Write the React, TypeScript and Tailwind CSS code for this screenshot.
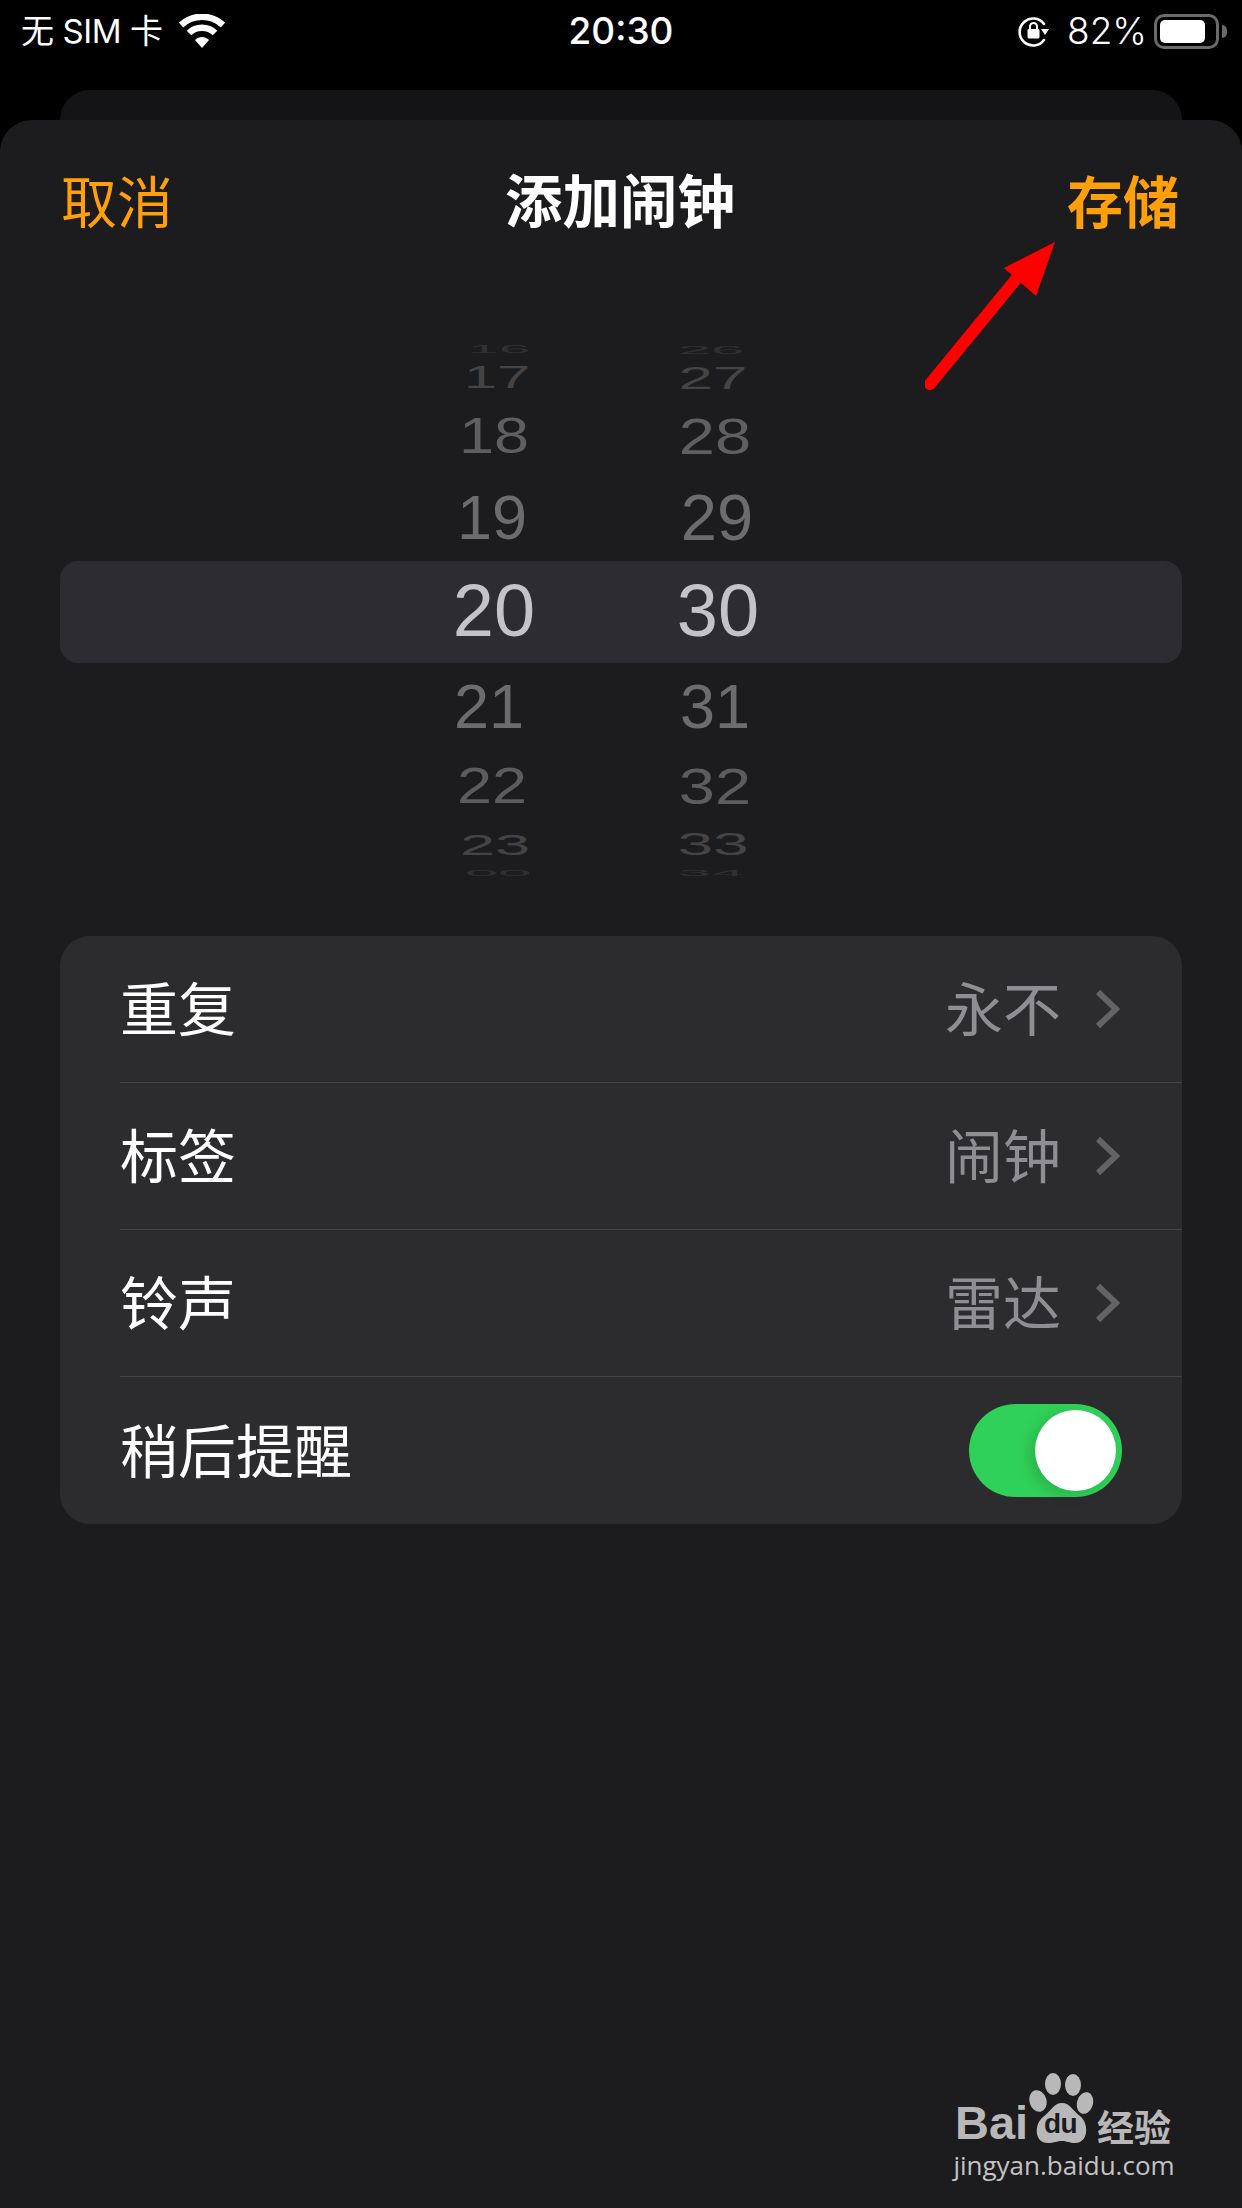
const cjk = "font-['Noto_Sans_CJK_SC','Liberation_Sans',sans-serif]";
const inter = "font-['Inter','Noto_Sans_CJK_SC',sans-serif]";

// wheel rows, squashed towards the top and bottom of the drum
const hours = [
  { label: "16", cls: "h-[20px] text-[56px] scale-y-[0.18] text-[#303032] translate-x-[5px]" },
  { label: "17", cls: "h-[36px] text-[60px] scale-y-[0.52] text-[#444446] translate-x-[3px]" },
  { label: "18", cls: "h-[80px] text-[63px] scale-y-[0.78] text-[#5f5f61]" },
  { label: "19", cls: "h-[82px] text-[63px] text-[#6c6c6e] -translate-x-[2px]" },
  { label: "20", cls: "h-[106px] text-[74px] text-[#c4c4c6]" },
  { label: "21", cls: "h-[84px] text-[63px] text-[#6c6c6e] -translate-x-[5px]" },
  { label: "22", cls: "h-[76px] text-[63px] scale-y-[0.78] text-[#5c5c5e] -translate-x-[2px]" },
  { label: "23", cls: "h-[40px] text-[63px] scale-y-[0.48] text-[#444446] translate-x-[1px]" },
  { label: "00", cls: "h-[18px] text-[60px] scale-y-[0.16] text-[#303032] translate-x-[4px]" },
];

const minutes = [
  { label: "26", cls: "h-[20px] text-[60px] scale-y-[0.18] text-[#303032] -translate-x-[7px]" },
  { label: "27", cls: "h-[36px] text-[62px] scale-y-[0.52] text-[#444446] -translate-x-[5px]" },
  { label: "28", cls: "h-[80px] text-[65px] scale-y-[0.78] text-[#5f5f61] -translate-x-[3px]" },
  { label: "29", cls: "h-[82px] text-[65px] text-[#6c6c6e] -translate-x-[1px]" },
  { label: "30", cls: "h-[106px] text-[74px] text-[#c4c4c6]" },
  { label: "31", cls: "h-[84px] text-[63px] text-[#6c6c6e] -translate-x-[3px]" },
  { label: "32", cls: "h-[76px] text-[65px] scale-y-[0.78] text-[#5c5c5e] -translate-x-[3px]" },
  { label: "33", cls: "h-[40px] text-[64px] scale-y-[0.48] text-[#444446] -translate-x-[5px]" },
  { label: "34", cls: "h-[18px] text-[60px] scale-y-[0.16] text-[#303032] -translate-x-[7px]" },
];

function WheelColumn({ rows }: { rows: { label: string; cls: string }[] }) {
  return (
    <div className="flex w-[160px] flex-col">
      {rows.map((row) => (
        <div key={row.label} className={`flex items-center justify-center leading-none font-['Liberation_Sans',sans-serif] ${row.cls}`}>
          {row.label}
        </div>
      ))}
    </div>
  );
}

function Chevron() {
  return (
    <svg width="26" height="40" viewBox="0 0 26 40" fill="none" className="mr-[2px] ml-[33px]">
      <path d="M4 3 L22 20 L4 37" stroke="#636366" strokeWidth="6" strokeLinejoin="miter" />
    </svg>
  );
}

function SettingRow({ label, value, last }: { label: string; value?: string; last?: boolean }) {
  return (
    <div className={`ml-[60px] flex h-[147px] items-center justify-between pr-[60px] ${last ? "" : "border-b border-[#444446]"}`}>
      <span className={`${cjk} pb-[6px] text-[58px] leading-none text-white`}>{label}</span>
      {value ? (
        <div className="flex items-center">
          <span className={`${cjk} pb-[6px] text-[58px] leading-none text-[#8e8e93]`}>{value}</span>
          <Chevron />
        </div>
      ) : (
        <div className="flex h-[93px] w-[153px] items-center justify-end rounded-full bg-[#30d158] pr-[6px]">
          <div className="h-[81px] w-[81px] rounded-full bg-white shadow-[-6px_4px_14px_rgba(0,0,0,0.14)]" />
        </div>
      )}
    </div>
  );
}

function StatusBar() {
  return (
    <div className={`flex h-[90px] items-start pt-[13px] text-white ${inter}`}>
      <div className="flex flex-1 items-center pl-[21px]">
        <span className="text-[33px] leading-[36px] tracking-[-0.4px]">无 SIM 卡</span>
        <svg width="46" height="34" viewBox="0 0 46 34" className="ml-[16px]" fill="none">
          <path d="M2 11 C14 0 32 0 44 11" stroke="white" strokeWidth="6.5" strokeLinecap="butt" />
          <path d="M10 19 C17 12 29 12 36 19" stroke="white" strokeWidth="6.5" />
          <path d="M16 26 L23 34 L30 26 C26 22 20 22 16 26 Z" fill="white" />
        </svg>
      </div>
      <span className="-translate-x-[3px] text-[37px] leading-[36px] font-medium">20:30</span>
      <div className="flex flex-1 items-center justify-end pr-[15px]">
        <svg width="32" height="32" viewBox="0 0 32 32" fill="none">
          <path d="M26 9 A13.5 13.5 0 1 0 26 25" stroke="white" strokeWidth="2.6" strokeLinecap="round" />
          <path d="M23 14 L31 14 L27 20 Z" fill="white" />
          <rect x="9.5" y="14" width="12" height="9.5" rx="1.5" fill="white" />
          <path d="M12 14 V11.5 A3.5 3.5 0 0 1 19 11.5 V14" stroke="white" strokeWidth="2" />
        </svg>
        <span className="ml-[17px] text-[37px] leading-[36px] font-light">82%</span>
        <div className="ml-[7px] flex h-[35px] w-[65px] items-center rounded-[10px] border-[3px] border-[#6a6a6c] pl-[3px]">
          <div className="h-[23px] w-[45px] rounded-[5px] bg-white" />
        </div>
        <div className="ml-[3px] h-[13px] w-[5px] rounded-r-full bg-[#6a6a6c]" />
      </div>
    </div>
  );
}

function Watermark() {
  return (
    <div className="absolute right-[67px] bottom-[28px] flex w-[222px] flex-col items-center text-[#b8b8b8]">
      <div className="relative flex h-[68px] w-[222px] items-end">
        <span className="pl-[2px] font-['Liberation_Sans',sans-serif] text-[47px] leading-[42px] font-bold text-[#b8b8b8]">Bai</span>
        <svg width="66" height="72" viewBox="0 0 66 72" className="absolute top-[-4px] left-[76px]">
          <ellipse cx="9" cy="29" rx="8.5" ry="11" transform="rotate(-15 9 29)" fill="#b8b8b8" />
          <ellipse cx="24" cy="12" rx="8" ry="11" fill="#b8b8b8" />
          <ellipse cx="44" cy="13" rx="8" ry="11" fill="#b8b8b8" />
          <ellipse cx="56" cy="31" rx="8" ry="11" transform="rotate(15 56 31)" fill="#b8b8b8" />
          <path d="M33 31 C41 31 44 39 51 44 C60 51 60 71 46 71 C40 71 38 69 33 69 C28 69 25 71 19 71 C5 71 5 52 14 45 C22 39 25 31 33 31 Z" fill="#b8b8b8" />
        </svg>
        <span className="absolute top-[33px] left-[91px] font-['Liberation_Sans',sans-serif] text-[28px] leading-[30px] font-bold tracking-[-0.5px] text-[#1c1c1e]">du</span>
        <span className={`${cjk} absolute top-[32px] left-[144px] text-[37px] leading-[36px] font-bold`}>经验</span>
      </div>
      <span className="mt-[6px] font-['Open_Sans',sans-serif] text-[26px] leading-[30px] text-[#c4c4c4]">jingyan.baidu.com</span>
    </div>
  );
}

export default function App() {
  return (
    <div className="flex h-[2208px] w-[1242px] flex-col overflow-hidden bg-black">
      <StatusBar />
      <div className="mx-[60px] h-[30px] rounded-t-[30px] bg-[#141416]" />

      <div className="relative flex-1 rounded-t-[32px] bg-[#1c1c1e]">
        <div className={`flex h-[164px] items-center justify-between pr-[63px] pb-[6px] pl-[61px] ${cjk}`}>
          <span className="w-[112px] text-[56px] leading-none text-[#ff9f0a]">取消</span>
          <span className="text-[57.5px] leading-none font-semibold text-white">添加闹钟</span>
          <span className="w-[112px] text-[56px] leading-none font-semibold text-[#ff9f0a]">存储</span>
        </div>

        <div className="mx-[60px] mt-[56px] grid">
          <div className="col-start-1 row-start-1 mt-[221px] h-[102px] rounded-[18px] bg-[#2c2c31]" />
          <div className="col-start-1 row-start-1 flex gap-[64px] pl-[354px]">
            <WheelColumn rows={hours} />
            <WheelColumn rows={minutes} />
          </div>
        </div>

        <div className="mx-[60px] mt-[54px] overflow-hidden rounded-[30px] bg-[#2c2c2e]">
          <SettingRow label="重复" value="永不" />
          <SettingRow label="标签" value="闹钟" />
          <SettingRow label="铃声" value="雷达" />
          <SettingRow label="稍后提醒" last />
        </div>

        <Watermark />

        {/* red annotation arrow pointing at the save button */}
        <svg width="140" height="160" viewBox="0 0 140 160" className="absolute top-[116px] left-[925px]">
          <path d="M5 148 L92 42" stroke="#ff0000" strokeWidth="12" strokeLinecap="round" />
          <path d="M130 6 L79 32 L111 60 Z" fill="#ff0000" />
        </svg>
      </div>
    </div>
  );
}
